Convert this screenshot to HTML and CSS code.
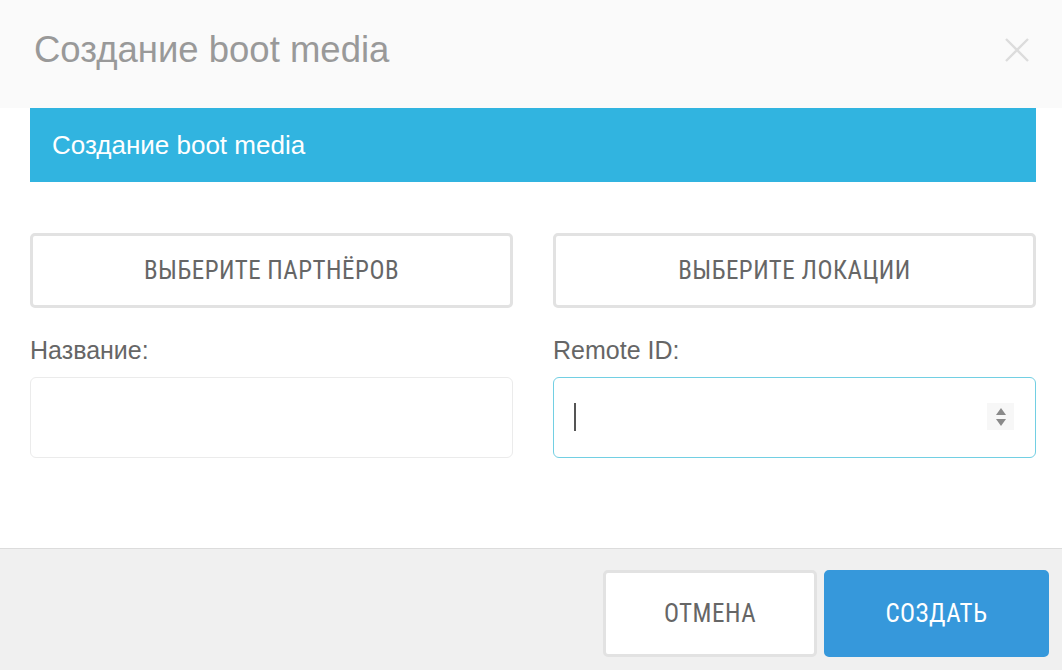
FILE: index.html
```html
<!DOCTYPE html>
<html lang="ru">
<head>
    <meta charset="UTF-8">
    <title>Создание boot media</title>
    <link rel="stylesheet" href="styles.css">
</head>
<body>
    <div class="modal">
        <div class="modal-header">
            <h1>Создание boot media</h1>
            <button class="close-button" aria-label="Закрыть">
                <svg width="24" height="24" viewBox="0 0 24 24">
                    <path d="M1 1 L23 23 M23 1 L1 23" stroke="#dcdcdc" stroke-width="2.4" fill="none"/>
                </svg>
            </button>
        </div>
        <div class="modal-body">
            <div class="callout">Создание boot media</div>
            <div class="form-grid">
                <button class="select-button">Выберите партнёров</button>
                <button class="select-button">Выберите локации</button>
                <div class="field">
                    <label for="name">Название:</label>
                    <input type="text" id="name" class="text-input">
                </div>
                <div class="field">
                    <label for="remote">Remote ID:</label>
                    <div class="input-wrap">
                        <input type="text" id="remote" class="text-input focused">
                        <span class="caret"></span>
                        <span class="spinner">
                            <svg width="12" height="22" viewBox="0 0 12 22">
                                <path d="M6 2 L11 9 L1 9 Z" fill="#8a8a8a"/>
                                <path d="M1 13 L11 13 L6 20 Z" fill="#8a8a8a"/>
                            </svg>
                        </span>
                    </div>
                </div>
            </div>
        </div>
        <div class="modal-footer">
            <button class="footer-button cancel">Отмена</button>
            <button class="footer-button primary">Создать</button>
        </div>
    </div>
</body>
</html>
```

FILE: styles.css
```css
* {
    margin: 0;
    padding: 0;
    box-sizing: border-box;
}

body {
    background: #fff;
    font-family: "Liberation Sans", Arial, sans-serif;
    width: 1062px;
    height: 670px;
    overflow: hidden;
}

.modal {
    display: flex;
    flex-direction: column;
    height: 670px;
}

.modal-header {
    height: 108px;
    background: #fafafa;
    display: flex;
    align-items: center;
    justify-content: space-between;
    padding: 0 33px 9px 34px;
}

.modal-header h1 {
    font-weight: 400;
    font-size: 36.5px;
    color: #999;
}

.close-button {
    background: transparent;
    border: none;
    width: 24px;
    height: 24px;
    cursor: pointer;
    display: flex;
}

.modal-body {
    padding: 0 26px 90px 30px;
    flex: 1;
}

.callout {
    background: #31b4e0;
    color: #fff;
    height: 74px;
    display: flex;
    align-items: center;
    padding-left: 22px;
    font-size: 26px;
}

.form-grid {
    display: grid;
    grid-template-columns: 1fr 1fr;
    column-gap: 40px;
    margin-top: 51px;
}

.select-button,
.footer-button {
    font-family: "Roboto Condensed", "Liberation Sans Narrow", Roboto, sans-serif;
    font-size: 25px;
    letter-spacing: 0.5px;
    text-transform: uppercase;
    color: #666;
    background: #fff;
    border: 3px solid #e2e2e2;
    border-radius: 5px;
    cursor: pointer;
}

.select-button {
    height: 75px;
}

.field {
    margin-top: 28px;
}

.field label {
    display: block;
    font-size: 25px;
    color: #666;
    margin-bottom: 12px;
}

.input-wrap {
    position: relative;
}

.text-input {
    width: 100%;
    height: 81px;
    border: 1px solid #ebebeb;
    border-radius: 6px;
    outline: none;
    padding: 0 20px;
    font-size: 22px;
}

.text-input.focused {
    border-color: #72cfe3;
}

.caret {
    position: absolute;
    left: 21px;
    top: 26px;
    width: 2px;
    height: 28px;
    background: #555;
}

.spinner {
    position: absolute;
    right: 22px;
    top: 26px;
    width: 27px;
    height: 27px;
    background: #f7f7f7;
    display: flex;
    align-items: center;
    justify-content: center;
}

.modal-footer {
    height: 122px;
    background: #f0f0f0;
    border-top: 1px solid #dcdcdc;
    display: flex;
    justify-content: flex-end;
    align-items: flex-start;
    gap: 7px;
    padding: 21px 13px 0 0;
}

.footer-button {
    height: 87px;
}

.footer-button.cancel {
    width: 214px;
}

.footer-button.primary {
    width: 225px;
    background: #3698db;
    border-color: #3698db;
    color: #fff;
}
```
